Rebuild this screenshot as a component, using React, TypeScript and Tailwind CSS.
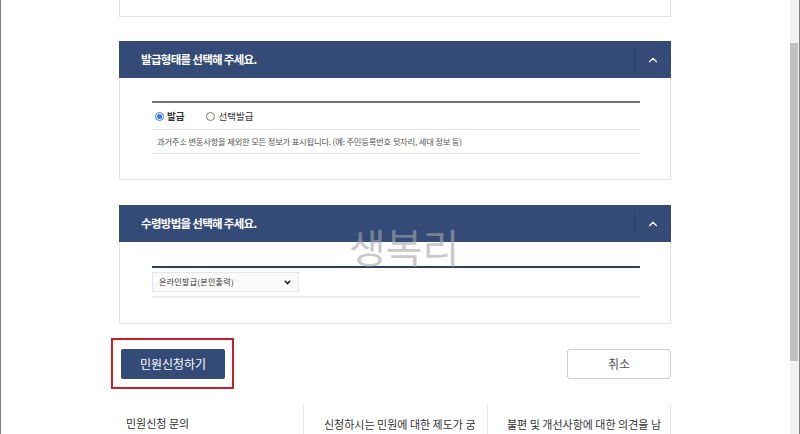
import { ChevronUp } from "lucide-react";

const FONT = "font-['Noto_Sans_CJK_KR','Noto_Sans',sans-serif]";

function SectionHeader({ title }: { title: string }) {
  return (
    <div className="flex h-[37px] items-stretch bg-[#344b77]">
      <div className="flex flex-1 items-center pl-[22px] text-[11.5px] font-bold tracking-[-0.7px] text-white">
        {title}
      </div>
      <div className="my-[6px] w-px bg-[#2b3f66]" />
      <div className="flex w-[36px] items-center justify-center text-white">
        <ChevronUp size={14} strokeWidth={2} />
      </div>
    </div>
  );
}

export default function App() {
  return (
    <div
      className={`${FONT} flex h-[434px] w-[800px] overflow-hidden border-l border-[#808080] bg-white`}
    >
      <div className="relative flex-1">
        <div className="ml-[118px] w-[552px]">
          {/* previous panel, bottom part */}
          <div className="h-[17px] border-x border-b border-[#e2e2e2]" />

          {/* 발급형태 */}
          <div className="mt-[24px]">
            <SectionHeader title="발급형태를 선택해 주세요." />
            <div className="border-x border-b border-[#e2e2e2] px-[32px] pb-[25px] pt-[23px]">
              <div className="mr-[-2px] border-t-2 border-[#6c7580]">
                <div className="flex h-[27px] items-center gap-[22px] border-b border-[#e6e6e6] pl-[3px] text-[9.5px] text-[#333]">
                  <label className="flex items-center gap-[3px] font-bold">
                    <span className="flex h-[9px] w-[9px] items-center justify-center rounded-full border border-[#3b7ad9]">
                      <span className="h-[5px] w-[5px] rounded-full bg-[#3b7ad9]" />
                    </span>
                    발급
                  </label>
                  <label className="flex items-center gap-[3px]">
                    <span className="h-[9px] w-[9px] rounded-full border border-[#777]" />
                    선택발급
                  </label>
                </div>
                <div className="flex h-[24px] items-center border-b border-[#e2e2e2] pl-[5px] text-[8.3px] tracking-[-0.2px] text-[#555]">
                  과거주소 변동사항을 제외한 모든 정보가 표시됩니다. (예: 주민등록번호 뒷자리, 세대 정보 등)
                </div>
              </div>
            </div>
          </div>

          {/* 수령방법 */}
          <div className="mt-[25px]">
            <SectionHeader title="수령방법을 선택해 주세요." />
            <div className="border-x border-b border-[#e2e2e2] px-[32px] pb-[25px] pt-[24px]">
              <div className="mr-[-2px] border-t-2 border-[#2e3d58]">
                <div className="flex h-[30px] items-center border-b-2 border-[#ececec]">
                  <div className="flex h-[20px] w-[147px] items-center justify-between border border-[#e6e6e6] bg-[#fafafa] pl-[6px] pr-[7px] text-[8px] tracking-[0.3px] text-[#333]">
                    <span>온라인발급(본인출력)</span>
                    <svg width="7" height="5" viewBox="0 0 7 5">
                      <path d="M0.8 0.8 L3.5 3.6 L6.2 0.8" fill="none" stroke="#222" strokeWidth="1.6" />
                    </svg>
                  </div>
                </div>
              </div>
            </div>
          </div>

          {/* buttons */}
          <div className="mt-[25px] flex items-center justify-between pl-[2px]">
            <div className="relative">
              <button className="h-[30px] w-[104px] rounded-[2px] bg-[#344b77] text-[12px] text-white">
                민원신청하기
              </button>
              <div className="absolute left-[-10px] top-[-11px] h-[51px] w-[123px] border-2 border-[#c8202a]" />
            </div>
            <button className="h-[30px] w-[104px] rounded-[3px] border border-[#cfcfcf] bg-white text-[12px] text-[#555]">
              취소
            </button>
          </div>

          {/* bottom info */}
          <div className="mt-[25px] grid grid-cols-3">
            <div className="h-[40px] pl-[7px] pt-[11px] text-[11px] text-[#333]">민원신청 문의</div>
            <div className="h-[40px] border-l border-[#e6e6e6] pl-[20px] pt-[11px] text-[11px] leading-[18px] text-[#333]">
              신청하시는 민원에 대한 제도가 궁
              <br />
              금하신가요?
            </div>
            <div className="h-[40px] border-x border-[#e6e6e6] pl-[19px] pt-[11px] text-[11px] leading-[18px] text-[#333]">
              불편 및 개선사항에 대한 의견을 남
              <br />
              겨주세요.
            </div>
          </div>
        </div>

        {/* watermark */}
        <div className="pointer-events-none absolute left-[348px] top-[226px] text-[40px] leading-none text-[#a8a8a8] opacity-60">
          생복리
        </div>
      </div>

      {/* scrollbar */}
      <div className="flex w-[11px] border-r border-[#808080]">
        <div className="ml-[1px] h-full w-[9px] bg-[#f1f1f1] pt-[43px]">
          <div className="h-[318px] w-[8px] bg-[#c1c1c1]" />
        </div>
      </div>
    </div>
  );
}
